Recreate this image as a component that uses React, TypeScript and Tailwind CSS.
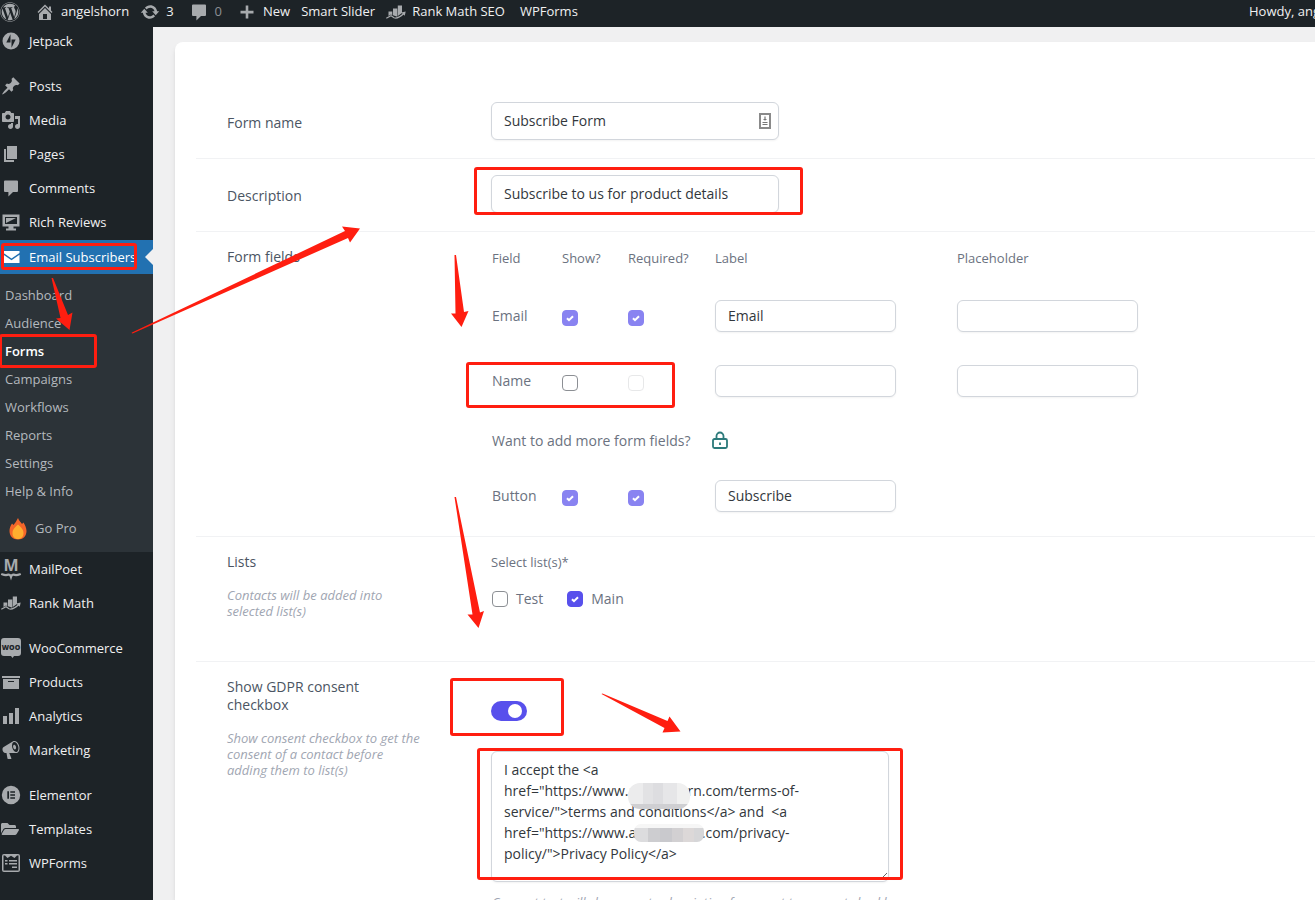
import type { ReactNode } from "react";
import { FaWordpress, FaFolderOpen } from "react-icons/fa";

const ICON_PATHS: Record<string, string> = {
    home: "M16 8.5l1.53 1.53-1.06 1.06L10 4.6l-6.47 6.49-1.06-1.06L10 2.5l4 4v-2h2v4zm-6-2.46l6 5.99V18H4v-5.97zM12 17v-5H8v5h4z",
    update: "M10.2 3.28c3.53 0 6.43 2.61 6.92 6h2.08l-3.5 4-3.5-4h2.32c-.45-1.97-2.21-3.45-4.32-3.45-1.45 0-2.73.71-3.54 1.78L4.95 5.66C6.23 4.2 8.11 3.28 10.2 3.28zm-.4 13.44c-3.52 0-6.43-2.61-6.92-6H.8l3.5-4c1.17 1.33 2.33 2.67 3.5 4H5.48c.45 1.97 2.21 3.45 4.32 3.45 1.45 0 2.73-.71 3.54-1.78l1.71 1.95c-1.28 1.46-3.15 2.38-5.25 2.38z",
    comment: "M4 2.5h12q1 0 1 1V13q0 1-1 1h-4l-4.600 4.500V14H4q-1 0-1-1V3.500q0-1 1-1z",
    plus: "M16.500 8.800v2.600h-5.200v5.200H8.700v-5.200H3.500V8.800h5.200V3.600h2.600v5.200z",
    jetpack: "M10 1.500a8.500 8.500 0 1 0 0 17a8.500 8.500 0 1 0 0-17zM9.500 11.500H5.300L9.500 3.300zM10.500 16.700V8.500h4.200z",
    pin: "M10.44 3.02l1.82-1.82 6.36 6.35-1.83 1.82c-1.05-.68-2.48-.57-3.41.36l-.75.75c-.92.93-1.04 2.35-.35 3.41l-1.83 1.82-2.41-2.41-2.8 2.79c-.42.42-3.38 2.71-3.8 2.29s1.86-3.39 2.28-3.81l2.79-2.79L4.1 9.36l1.83-1.82c1.05.69 2.48.57 3.4-.36l.75-.75c.93-.92 1.05-2.35.36-3.41z",
    media: "M13 11V4c0-.55-.45-1-1-1h-1.67L9 1H5L3.67 3H2c-.55 0-1 .45-1 1v7c0 .55.45 1 1 1h10c.55 0 1-.45 1-1zM7 4.5c1.38 0 2.5 1.12 2.5 2.5S8.38 9.5 7 9.5 4.5 8.38 4.5 7 5.62 4.5 7 4.5zM14 6h5v10.5c0 1.38-1.12 2.5-2.5 2.5S14 17.88 14 16.5s1.12-2.5 2.5-2.5c.17 0 .34.02.5.05V9h-3V6zm-4 8.05V13h2v3.5c0 1.38-1.12 2.5-2.5 2.5S7 17.88 7 16.5 8.12 14 9.5 14c.17 0 .34.02.5.05z",
    page: "M6 15V2h10v13H6zm-1 1h8v2H3V5h2v11z",
    monitor: "M1.500 2.500h17v12h-6v2h2.500v2H5v-2h2.500v-2h-6zM4 5v7h12V5zM5 6h10l-5 2.500L5 11z",
    mail: "M2.500 4h16v2L10.500 11.500 2.500 6zM2.500 7.800l8 5.500 8-5.500V16h-16z",
    products: "M19 4v2H1V4h18zM2 7h16v10H2V7zm11 3V9H7v1h6z",
    chart: "M18 18V2h-4v16h4zm-6 0V7H8v11h4zm-6 0v-8H2v8h4z",
    megaphone: "M18.15 5.94c.46 1.62.38 3.22-.02 4.48-.42 1.28-1.26 2.18-2.3 2.48-.16.06-.26.06-.4.06-.06.02-.12.02-.18.02-.06.02-.14.02-.22.02h-6.8l2.22 5.5c.02.14-.06.26-.14.34-.08.1-.24.16-.34.16H6.95c-.1 0-.26-.06-.34-.16-.08-.08-.16-.2-.14-.34l-1-5.5H4.25l-.02-.02c-.5.06-1.08-.18-1.54-.62s-.88-1.08-1.06-1.88c-.24-.8-.2-1.56-.02-2.2.18-.62.58-1.08 1.06-1.3l.02-.02 9-5.4c.1-.06.18-.1.24-.16.06-.04.14-.08.24-.12.16-.08.28-.12.5-.18 1.04-.3 2.24.1 3.22.98s1.84 2.24 2.26 3.86zm-2.58 5.98h-.02c.4-.1.74-.34 1.04-.7.58-.7.86-1.76.86-3.04 0-.64-.1-1.3-.28-1.98-.34-1.36-1.02-2.5-1.78-3.24s-1.68-1.1-2.46-.88c-.82.22-1.4.96-1.7 2-.32 1.04-.28 2.36.06 3.72.38 1.36 1 2.5 1.8 3.24.78.74 1.62 1.1 2.48.88zm-2.54-7.08c.22-.04.42-.02.62.04.38.16.76.48 1.02 1s.42 1.2.42 1.78c0 .3-.04.56-.12.8-.18.48-.44.84-.86.94-.34.1-.8-.06-1.14-.4s-.64-.86-.78-1.5c-.18-.62-.12-1.24.02-1.72s.48-.84.82-.94z",
    elementor: "M10 .8a9.200 9.200 0 1 0 0 18.400a9.200 9.200 0 1 0 0-18.400zM6.300 6.200h1.700v7.600H6.300zM9.300 6.200h4.700v1.600H9.300zM9.300 9.200h4.700v1.600H9.300zM9.300 12.200h4.700v1.600H9.300z",
    wpforms: "M3 1h14q2 0 2 2v14q0 2-2 2H3q-2 0-2-2V3q0-2 2-2zM2.500 2.500v15h15v-15h-1.500L13.500 5 10 2.800 6.500 5 4 2.500zM4 7h2.500v1.500H4zM8 7h8v1.500H8zM4 10h2.500v1.500H4zM8 10h8v1.500H8zM11 13.500h5V15h-5z",
};

function Icon({ name }: { name: string }) {
    return (
        <svg viewBox="0 0 20 20" className="size-5 shrink-0" fill="currentColor" fillRule="evenodd" aria-hidden="true">
            <path d={ICON_PATHS[name]} />
        </svg>
    );
}

function RankMathIcon() {
    return (
        <svg viewBox="0 0 20 20" className="size-5 shrink-0" fill="currentColor" aria-hidden="true">
            <path d="M2.500 9.500h3.800v4L5 12.500l-2.500 1.500zM7 6.500h4.300v8.300L7 13.200zM11.800 3.500H16V11l-4.200 3z" />
            <path d="M.3 16.300L5 13.800l3 2q4 1.300 9.500-4" fill="none" stroke="currentColor" strokeWidth="1.200" />
            <path d="M15.300 10.500l4.400-1-1 4.200z" />
        </svg>
    );
}

function MailPoetIcon() {
    return (
        <svg viewBox="0 0 20 20" className="size-5 shrink-0 overflow-visible" fill="currentColor" aria-hidden="true">
            <text x="10" y="12" textAnchor="middle" fontSize="16" fontWeight="700" fontFamily="Open Sans, sans-serif">
                M
            </text>
            <path d="M1 15.300q4 1.500 6.500.300 1.800 0 2.500 2.200.7-2.200 2.500-2.200 2.500 1.200 6.500-.300" fill="none" stroke="currentColor" strokeWidth="2.200" strokeLinecap="round" />
        </svg>
    );
}

function WooIcon() {
    return (
        <svg viewBox="0 0 20 20" className="size-5 shrink-0" fill="currentColor" aria-hidden="true">
            <path d="M3 0h14q3 0 3 3v12q0 3-3 3h-4l-1.500 2L10 18H3q-3 0-3-3V3q0-3 3-3z" />
            <text x="10" y="12" textAnchor="middle" fontSize="7" fontWeight="800" fill="#1d2327" fontFamily="Open Sans, sans-serif">
                WOO
            </text>
        </svg>
    );
}

const MENU_TOP = [
    { label: "Posts", icon: <Icon name="pin" /> },
    { label: "Media", icon: <Icon name="media" /> },
    { label: "Pages", icon: <Icon name="page" /> },
    { label: "Comments", icon: <Icon name="comment" /> },
    { label: "Rich Reviews", icon: <Icon name="monitor" /> },
];

const SUBMENU = ["Dashboard", "Audience", "Forms", "Campaigns", "Workflows", "Reports", "Settings", "Help & Info"];

const MENU_BOTTOM = [
    [
        { label: "MailPoet", icon: <MailPoetIcon /> },
        { label: "Rank Math", icon: <RankMathIcon /> },
    ],
    [
        { label: "WooCommerce", icon: <WooIcon /> },
        { label: "Products", icon: <Icon name="products" /> },
        { label: "Analytics", icon: <Icon name="chart" /> },
        { label: "Marketing", icon: <Icon name="megaphone" /> },
    ],
    [
        { label: "Elementor", icon: <Icon name="elementor" /> },
        { label: "Templates", icon: <FaFolderOpen className="h-5 w-[18px] shrink-0" /> },
        { label: "WPForms", icon: <Icon name="wpforms" /> },
    ],
];

function MenuItem({ label, icon }: { label: string; icon: ReactNode }) {
    return (
        <a href="#" className="flex h-[34px] items-center pl-px text-[#f0f0f1] hover:text-[#72aee6]">
            <span className="flex w-7 text-[#a7aaad]">{icon}</span>
            <span className="pt-0.5">{label}</span>
        </a>
    );
}

function BarItem({ icon, className = "", children }: { icon?: ReactNode; className?: string; children?: ReactNode }) {
    return (
        <a href="#" className={`flex items-center gap-[6px] whitespace-nowrap ${className}`}>
            {icon && <span className="text-[#a7aaad]">{icon}</span>}
            {children}
        </a>
    );
}

function AdminBar() {
    return (
        <header className="flex h-[27px] shrink-0 items-center overflow-hidden bg-[#1d2327] pb-1 text-[13px] text-[#f0f0f1]">
            <BarItem icon={<FaWordpress className="size-5" />} className="mr-[15px]" />
            <BarItem icon={<Icon name="home" />} className="mr-[11px]">angelshorn</BarItem>
            <BarItem icon={<Icon name="update" />} className="mr-[15px]">3</BarItem>
            <BarItem icon={<Icon name="comment" />} className="mr-[15px]">
                <span className="text-[#8c8f94]">0</span>
            </BarItem>
            <BarItem icon={<Icon name="plus" />} className="mr-[11px]">New</BarItem>
            <BarItem className="mr-[11px]">Smart Slider</BarItem>
            <BarItem icon={<RankMathIcon />} className="mr-[15px]">Rank Math SEO</BarItem>
            <BarItem>WPForms</BarItem>
            <BarItem className="ml-auto w-[66px]">Howdy, angelshorn</BarItem>
        </header>
    );
}

function Sidebar() {
    return (
        <nav className="flex w-[153px] shrink-0 flex-col bg-[#1d2327] text-[13px]">
            <a href="#" className="mb-[14px] flex h-7 shrink-0 items-center pl-px text-[#f0f0f1]">
                <span className="flex w-7 text-[#a7aaad]">
                    <Icon name="jetpack" />
                </span>
                <span className="pt-0.5">Jetpack</span>
            </a>
            {MENU_TOP.map((item) => (
                <MenuItem key={item.label} {...item} />
            ))}

            {/* Current plugin, with the notch that points at the page */}
            <a href="#" className="mt-px flex h-[34px] items-center bg-[#2271b1] pl-px whitespace-nowrap text-white">
                <span className="flex w-7 shrink-0">
                    <Icon name="mail" />
                </span>
                <span className="pt-0.5">Email Subscribers</span>
                <span className="ml-auto border-y-8 border-r-8 border-y-transparent border-r-[#f0f0f1]" />
            </a>
            <div className="bg-[#2c3338] pt-2 pl-[5px]">
                {SUBMENU.map((label) => (
                    <a
                        key={label}
                        href="#"
                        className={`flex h-7 items-center ${label === "Forms" ? "font-semibold text-white" : "text-[#b4b9be]"}`}
                    >
                        {label}
                    </a>
                ))}
                <a href="#" className="flex h-[46px] items-center gap-2 pl-1 text-[#b4b9be]">
                    <svg viewBox="0 0 18 22" className="h-[22px] w-[18px]" aria-hidden="true">
                        <path d="M9 0c1 3 3 4 4 6l1.500-1.500C16 7 17.500 10 17.500 13c0 5-3.500 8.500-8.500 8.500S.5 18 .5 13c0-3 1-5 2.500-7.500L4.500 7C6 5 7.500 3 9 0z" fill="#f4662a" />
                        <path d="M9 6.500c3 3 5.500 5 5.500 8.500 0 3.500-2 6-5.500 6s-5.500-2.500-5.500-6c0-3.500 2.500-5.500 5.500-8.500z" fill="#ffae2f" />
                    </svg>
                    Go Pro
                </a>
            </div>

            {MENU_BOTTOM.map((group, i) => (
                <div key={i} className="mb-[11px]">
                    {group.map((item) => (
                        <MenuItem key={item.label} {...item} />
                    ))}
                </div>
            ))}
        </nav>
    );
}

interface CheckboxProps {
    label: string;
    checked?: boolean;
    disabled?: boolean;
}

function Checkbox({ label, checked = false, disabled = false }: CheckboxProps) {
    return (
        <span className={`relative block size-4 ${disabled ? (checked ? "opacity-70" : "opacity-20") : ""}`}>
            <input
                type="checkbox"
                aria-label={label}
                defaultChecked={checked}
                disabled={disabled}
                className="peer block size-4 appearance-none rounded border border-[#8c8f94] bg-white checked:border-[#5850ec] checked:bg-[#5850ec]"
            />
            <svg viewBox="0 0 16 16" className="pointer-events-none absolute inset-0 hidden size-4 peer-checked:block" aria-hidden="true">
                <path d="M5 8.200l2 2 4-4" fill="none" stroke="#fff" strokeWidth="2" />
            </svg>
        </span>
    );
}

function TextInput({ label, value = "" }: { label: string; value?: string }) {
    return (
        <input
            type="text"
            aria-label={label}
            defaultValue={value}
            className="block h-8 w-[181px] rounded-md border border-[#d2d6dc] bg-white px-3 text-[14px] text-[#32373c] shadow-xs"
        />
    );
}

function FormRow({ label, htmlFor, help, className = "", labelClass = "", children }: {
    label: string;
    htmlFor?: string;
    help?: string;
    className?: string;
    labelClass?: string;
    children: ReactNode;
}) {
    return (
        <div className={`flex border-b border-[#f1f2f4] pt-4 pl-[31px] ${className}`}>
            <div className="w-[264px] shrink-0 pr-[68px]">
                <label htmlFor={htmlFor} className={`block leading-[18px] text-[#4b5563] ${labelClass}`}>
                    {label}
                </label>
                {help && <p className="mt-4 text-[13px] leading-4 text-[#9fa6b2] italic">{help}</p>}
            </div>
            <div className="min-w-0 grow">{children}</div>
        </div>
    );
}

const FIELDS = [
    { name: "Email", checked: true, label: "Email", showDisabled: true, placeholder: true },
    { name: "Name", checked: false, label: "", showDisabled: false, placeholder: true },
    { name: "Button", checked: true, label: "Subscribe", showDisabled: true, placeholder: false },
];

function FieldRow({ field }: { field: (typeof FIELDS)[number] }) {
    return (
        <tr className="h-[65px]">
            <td className="pl-px">{field.name}</td>
            <td className="pt-1">
                <Checkbox label={`Show ${field.name}`} checked={field.checked} disabled={field.showDisabled} />
            </td>
            <td className="pt-1">
                <Checkbox label={`Require ${field.name}`} checked={field.checked} disabled />
            </td>
            <td>
                <TextInput label={`${field.name} label`} value={field.label} />
            </td>
            <td>{field.placeholder && <TextInput label={`${field.name} placeholder`} />}</td>
        </tr>
    );
}

function FieldsTable() {
    return (
        <table className="-mt-4 w-full table-fixed border-collapse text-left text-[#6b7280]">
            <thead>
                <tr className="h-[51px] text-[13px]">
                    <th className="w-[71px] pt-0.5 pl-px font-normal">Field</th>
                    <th className="w-[66px] pt-0.5 font-normal">Show?</th>
                    <th className="w-[87px] pt-0.5 font-normal">Required?</th>
                    <th className="w-[242px] pt-0.5 font-normal">Label</th>
                    <th className="pt-0.5 font-normal">Placeholder</th>
                </tr>
            </thead>
            <tbody>
                <FieldRow field={FIELDS[0]} />
                <FieldRow field={FIELDS[1]} />
                <tr className="h-[50px]">
                    <td colSpan={5} className="pt-1 pl-px">
                        <div className="flex items-center gap-5">
                            Want to add more form fields?
                            <svg viewBox="0 0 18 18" className="size-[18px]" fill="none" stroke="#2c7a7b" strokeWidth="1.800" aria-hidden="true">
                                <rect x="2" y="8" width="14" height="9" rx="1.500" />
                                <path d="M5.500 8V5a3.500 3.500 0 0 1 7 0v3M9 11.500v2.500" />
                            </svg>
                        </div>
                    </td>
                </tr>
                <FieldRow field={FIELDS[2]} />
            </tbody>
        </table>
    );
}

const CONSENT_TEXT = `I accept the <a
href="https://www.angelshorn.com/terms-of-
service/">terms and conditions</a> and  <a
href="https://www.angelshorn.com/privacy-
policy/">Privacy Policy</a>`;

function FormCard() {
    return (
        <form className="min-w-0 grow rounded-tl-lg bg-white pt-11 pl-[21px] text-[14px] shadow-md">
            <FormRow label="Form name" htmlFor="form-name" className="pb-[18px]" labelClass="pt-3">
                <div className="relative w-72">
                    <input
                        id="form-name"
                        type="text"
                        defaultValue="Subscribe Form"
                        className="block h-[38px] w-full rounded-md border border-[#d2d6dc] bg-white pr-12 pb-0.5 pl-3 text-[#32373c] shadow-xs"
                    />
                    <svg viewBox="0 0 12 16" className="absolute top-[11px] right-2 h-4 w-3" aria-hidden="true">
                        <rect x="1" y="1" width="10" height="14" fill="#fff" stroke="#8a8a8a" strokeWidth="2" />
                        <path d="M6 3.500v4M4.500 6.500h3M3.500 9.500h5M3.500 11.500h5" stroke="#777" strokeWidth="1.200" />
                    </svg>
                </div>
            </FormRow>

            <FormRow label="Description" htmlFor="form-desc" className="pb-[18px]" labelClass="pt-3">
                <input
                    id="form-desc"
                    type="text"
                    defaultValue="Subscribe to us for product details"
                    className="block h-[38px] w-72 rounded-md border border-[#d2d6dc] bg-white pr-12 pb-0.5 pl-3 text-[#32373c] shadow-xs"
                />
            </FormRow>

            <FormRow label="Form fields" className="pb-2">
                <FieldsTable />
            </FormRow>

            <FormRow label="Lists" help="Contacts will be added into selected list(s)" className="pb-[42px]">
                <p className="text-[13px] leading-[18px] text-[#6b7280]">Select list(s)*</p>
                <div className="mt-[19px] flex gap-6 leading-[18px] text-[#6b7280]">
                    <label className="flex items-center gap-2 pl-px">
                        <Checkbox label="Test" />
                        Test
                    </label>
                    <label className="flex items-center gap-2">
                        <Checkbox label="Main" checked />
                        Main
                    </label>
                </div>
            </FormRow>

            <FormRow
                label="Show GDPR consent checkbox"
                htmlFor="gdpr"
                help="Show consent checkbox to get the consent of a contact before adding them to list(s)"
            >
                <label className="relative mt-[23px] block h-5 w-9">
                    <input id="gdpr" type="checkbox" defaultChecked className="peer block h-5 w-9 appearance-none rounded-full bg-gray-300 checked:bg-[#5850ec]" />
                    <span className="absolute top-[3px] left-1 size-[14px] rounded-full bg-white peer-checked:left-[17px]" />
                </label>
                <textarea
                    aria-label="Consent text"
                    defaultValue={CONSENT_TEXT}
                    className="mt-[30px] block h-[131px] w-[398px] rounded-md border border-[#d2d6dc] bg-white px-3 py-[7px] leading-[21px] text-[#32373c] shadow-xs"
                />
                <p className="mt-3 pl-px text-[13px] leading-4 text-[#9fa6b2] italic">
                    Consent text will show up at subscription form next to consent checkbox.
                </p>
            </FormRow>
        </form>
    );
}

const BOXES = [
    { x: 1, y: 243, w: 136, h: 27 },
    { x: -1, y: 334, w: 98, h: 34 },
    { x: 474, y: 167, w: 329, h: 48 },
    { x: 466, y: 362, w: 209, h: 46 },
    { x: 450, y: 678, w: 114, h: 58 },
    { x: 477, y: 748, w: 426, h: 132 },
];

const ARROWS = [
    "51.500,278 53,278 68,315 72.500,312.500 69.500,330 56,318.500 60.500,318",
    "131.500,333 132,332.500 345,231 342,226.500 360,228.500 350,242.500 348,238 132.500,333.500",
    "454.500,255 456,255 464,312 468.500,311 461.500,327 451,313.500 455.500,313.500",
    "454.500,497 456,497 480,612.500 484,611 478.500,628 467.500,614.500 472.500,614.500",
    "601.500,694 602.500,693.500 667.500,721 669.500,716.500 680.500,731.500 662.500,732.500 664.500,728",
];

// Mosaic tiles that hide the domain name
const TILES = [
    { x: 628, y: 783, w: 15, h: 21, fill: "#ececed" },
    { x: 643, y: 783, w: 10, h: 21, fill: "#e2e2e4" },
    { x: 653, y: 783, w: 10, h: 21, fill: "#dddde0" },
    { x: 663, y: 783, w: 14, h: 21, fill: "#e6e6e8" },
    { x: 677, y: 783, w: 13, h: 21, fill: "#f0f0f0" },
    { x: 628, y: 804, w: 62, h: 5, fill: "#cfcfd2" },
    { x: 634, y: 820, w: 80, h: 8, fill: "#f6f6f6" },
    { x: 634, y: 828, w: 14, h: 14, fill: "#dcdcde" },
    { x: 648, y: 828, w: 12, h: 14, fill: "#cdcdd0" },
    { x: 660, y: 828, w: 12, h: 14, fill: "#c9c9cd" },
    { x: 672, y: 828, w: 11, h: 14, fill: "#d2d0d2" },
    { x: 683, y: 828, w: 11, h: 14, fill: "#dcd8d8" },
    { x: 694, y: 828, w: 11, h: 14, fill: "#d6d6d8" },
];

function Annotations() {
    return (
        <svg className="pointer-events-none absolute inset-0 size-full" aria-hidden="true">
            <clipPath id="mosaic">
                <rect x="628" y="783" width="62" height="26" rx="12" />
                <rect x="634" y="824" width="70" height="18" rx="7" />
            </clipPath>
            <g clipPath="url(#mosaic)">
                {TILES.map((t) => (
                    <rect key={`${t.x}-${t.y}`} x={t.x} y={t.y} width={t.w} height={t.h} fill={t.fill} />
                ))}
            </g>
            {BOXES.map((b) => (
                <rect key={b.y} x={b.x + 1.5} y={b.y + 1.5} width={b.w - 3} height={b.h - 3} rx="1.500" fill="none" stroke="#ff1e10" strokeWidth="3" />
            ))}
            {ARROWS.map((points) => (
                <polygon key={points} points={points} fill="#ff1e10" />
            ))}
        </svg>
    );
}

export default function App() {
    return (
        <div className="relative flex h-screen flex-col overflow-hidden bg-[#f0f0f1] font-['Open_Sans','Noto_Sans',sans-serif]">
            <AdminBar />
            <div className="flex min-h-0 grow">
                <Sidebar />
                <main className="flex min-w-0 grow pt-[15px] pl-[22px]">
                    <FormCard />
                </main>
            </div>
            <Annotations />
        </div>
    );
}
